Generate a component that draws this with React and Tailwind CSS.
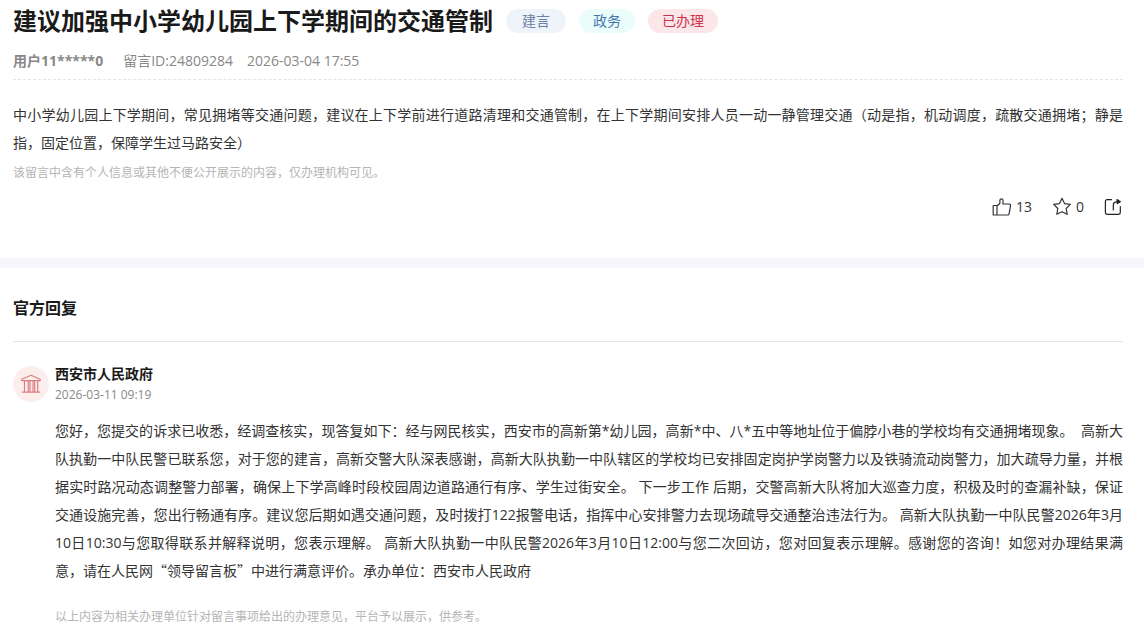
import React, { useState } from "react";

const reply = {
  org: "西安市人民政府",
  time: "2026-03-11 09:19",
  note: "以上内容为相关办理单位针对留言事项给出的办理意见，平台予以展示，供参考。",
};

export default function App() {
  return (
    <div className="min-h-screen bg-white font-['Open_Sans','Noto_Sans_CJK_SC',sans-serif] text-[#333]">
      <Message />
      <div className="h-2.5 bg-[#f6f7fa]"></div>
      <Reply />
    </div>
  );
}

const Message = () => {
  const [liked, setLiked] = useState(false);
  const [starred, setStarred] = useState(false);

  return (
    <section className="pt-1 pr-[21px] pb-[39px] pl-[13px]">
      <div className="flex flex-row flex-wrap items-center gap-[13px]">
        <h1 className="text-2xl leading-[34px] font-bold text-[#1a1a1a]">
          建议加强中小学幼儿园上下学期间的交通管制
        </h1>
        <span className="rounded-full bg-[#eff3fa] px-4 text-sm leading-6 text-[#6b83a3]">
          建言
        </span>
        <span className="rounded-full bg-[#ebfdfa] px-3.5 text-sm leading-6 text-[#4478ad]">
          政务
        </span>
        <span className="rounded-full bg-[#fbe7ea] px-3.5 text-sm leading-6 text-[#d0324a]">
          已办理
        </span>
      </div>
      <div className="mt-[13px] flex flex-row items-center border-b border-dashed border-[#e4e4e4] pb-2 text-sm leading-5 text-[#888]">
        <span className="mr-5 font-bold">用户11*****0</span>
        <span className="mr-3.5">留言ID:24809284</span>
        <span>2026-03-04 17:55</span>
      </div>
      <p className="mt-[21px] text-justify text-sm leading-7">
        中小学幼儿园上下学期间，常见拥堵等交通问题，建议在上下学前进行道路清理和交通管制，在上下学期间安排人员一动一静管理交通（动是指，机动调度，疏散交通拥堵；静是指，固定位置，保障学生过马路安全）
      </p>
      <p className="mt-1.5 text-xs leading-5 text-[#b5b5b5]">
        该留言中含有个人信息或其他不便公开展示的内容，仅办理机构可见。
      </p>
      <div className="mt-3 flex flex-row items-center justify-end gap-5 pr-px text-sm leading-6">
        <button
          onClick={() => setLiked(!liked)}
          aria-pressed={liked}
          aria-label="点赞"
          className="flex cursor-pointer flex-row items-center gap-1"
        >
          <LikeIcon />
          <span>{liked ? 14 : 13}</span>
        </button>
        <button
          onClick={() => setStarred(!starred)}
          aria-pressed={starred}
          aria-label="收藏"
          className="flex cursor-pointer flex-row items-center gap-1"
        >
          <StarIcon />
          <span>{starred ? 1 : 0}</span>
        </button>
        <button aria-label="分享" className="cursor-pointer">
          <ShareIcon />
        </button>
      </div>
    </section>
  );
};

const Reply = () => {
  return (
    <section className="pt-7 pr-[21px] pb-1 pl-[13px]">
      <h2 className="border-b border-[#e6e6e6] pb-[21px] text-base leading-6 font-bold text-[#1a1a1a]">
        官方回复
      </h2>
      <div className="mt-6 flex flex-row gap-1.5">
        <div className="flex h-9 w-9 shrink-0 items-center justify-center rounded-full bg-[#fdeeee]">
          <GovIcon />
        </div>
        <div className="flex-1">
          <h3 className="text-sm leading-4 font-bold text-[#1a1a1a]">
            {reply.org}
          </h3>
          <p className="mt-[5px] text-xs leading-4 text-[#888]">{reply.time}</p>
          <p className="mt-3.5 text-justify text-sm leading-7">
            您好，您提交的诉求已收悉，经调查核实，现答复如下：经与网民核实，西安市的高新第*幼儿园，高新*中、八*五中等地址位于偏脖小巷的学校均有交通拥堵现象。&nbsp;
            高新大队执勤一中队民警已联系您，对于您的建言，高新交警大队深表感谢，高新大队执勤一中队辖区的学校均已安排固定岗护学岗警力以及铁骑流动岗警力，加大疏导力量，并根据实时路况动态调整警力部署，确保上下学高峰时段校园周边道路通行有序、学生过街安全。
            下一步工作
            后期，交警高新大队将加大巡查力度，积极及时的查漏补缺，保证交通设施完善，您出行畅通有序。建议您后期如遇交通问题，及时拨打122报警电话，指挥中心安排警力去现场疏导交通整治违法行为。
            高新大队执勤一中队民警2026年3月10日10:30与您取得联系并解释说明，您表示理解。
            高新大队执勤一中队民警2026年3月10日12:00与您二次回访，您对回复表示理解。感谢您的咨询！如您对办理结果满意，请在人民网
            <span className="font-['Noto_Sans_CJK_SC',sans-serif] leading-none">
              “领导留言板”
            </span>
            中进行满意评价。承办单位：西安市人民政府
          </p>
          <p className="mt-5 text-xs leading-6 text-[#b5b5b5]">{reply.note}</p>
        </div>
      </div>
    </section>
  );
};

const LikeIcon = () => (
  <svg
    width="20"
    height="20"
    viewBox="0 0 20 20"
    fill="none"
    stroke="#333"
    strokeWidth="1.2"
    strokeLinejoin="round"
  >
    <path d="M1.2 8.5H5V18H1.2zM5 9L7.9 6.3V3.2C7.9 1.3 10.9 1.3 11 3.2V7H16.8C18.1 7 18.7 7.7 18.5 8.8L17.2 16.3C17 17.5 16.4 18 15.4 18H5" />
  </svg>
);

const StarIcon = () => (
  <svg
    width="20"
    height="20"
    viewBox="0 0 20 20"
    fill="none"
    stroke="#333"
    strokeWidth="1.2"
    strokeLinejoin="round"
  >
    <path d="M10 1.3L12.5 6.6L18.3 7.4L14.2 11.5L15.2 17.3L10 14.7L4.8 17.3L5.8 11.5L1.7 7.4L7.5 6.6Z" />
  </svg>
);

const ShareIcon = () => (
  <svg
    width="18"
    height="18"
    viewBox="0 0 18 18"
    fill="none"
    stroke="#222"
    strokeWidth="1.2"
    strokeLinecap="round"
    strokeLinejoin="round"
  >
    <path d="M7.5 1.7H3.2C2 1.7 1.4 2.3 1.4 3.4V14.6C1.4 15.7 2 16.3 3.2 16.3H14.6C15.7 16.3 16.3 15.7 16.3 14.6V8.5" />
    <path d="M9.3 12V7.5C9.3 5 10.5 3.8 13 3.8H15" />
    <path d="M13 1.6L16.3 3.8L13.4 5.6Z" fill="#222" />
  </svg>
);

const GovIcon = () => (
  <svg
    width="20"
    height="20"
    viewBox="0 0 20 20"
    fill="none"
    stroke="#dc7f7f"
    strokeWidth="1.2"
    strokeLinejoin="round"
  >
    <path d="M.8 5.3L10 1.2L19.2 5.3V6.6H.8zM3.5 6.6V17.6M7.3 6.6V17.6M9 6.6V17.6M12 6.6V17.6M13.7 6.6V17.6M16.7 6.6V17.6M.8 18.2H19.2" />
  </svg>
);
